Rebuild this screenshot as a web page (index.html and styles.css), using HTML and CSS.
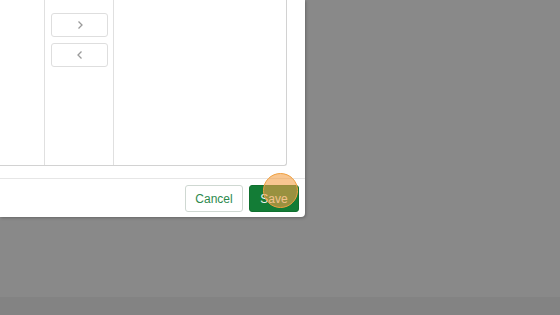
FILE: index.html
```html
<!DOCTYPE html>
<html>
<head>
<meta charset="utf-8">
<link rel="stylesheet" href="styles.css">
</head>
<body>
<div class="screen">
  <div class="modal">
    <div class="body">
      <div class="panel">
        <div class="col col-left"></div>
        <div class="col col-mid">
          <button class="arrow"><svg width="8" height="10" viewBox="0 0 8 10"><path d="M2.5 1.5 L6 5 L2.5 8.5" fill="none" stroke="#9a9a9a" stroke-width="1.3"/></svg></button>
          <button class="arrow"><svg width="8" height="10" viewBox="0 0 8 10"><path d="M5.5 1.5 L2 5 L5.5 8.5" fill="none" stroke="#9a9a9a" stroke-width="1.3"/></svg></button>
        </div>
        <div class="col col-right"></div>
      </div>
    </div>
    <div class="footer">
      <button class="btn btn-cancel">Cancel</button>
      <button class="btn btn-save">Save<span class="click"></span></button>
    </div>
  </div>
  <div class="strip"></div>
</div>
</body>
</html>
```
FILE: styles.css
```css
html, body {
  margin: 0;
  padding: 0;
}
body {
  width: 560px;
  height: 315px;
  overflow: hidden;
  background: #898989;
  font-family: "Liberation Sans", Arial, sans-serif;
}
.screen {
  width: 560px;
  height: 315px;
  display: flex;
  flex-direction: column;
}
.modal {
  width: 305px;
  height: 217px;
  background: #ffffff;
  border-radius: 0 0 4px 0;
  box-shadow: 1px 1px 3px rgba(0,0,0,0.25);
  display: flex;
  flex-direction: column;
  box-sizing: border-box;
}
.body {
  height: 178px;
  box-sizing: border-box;
}
.panel {
  width: 287px;
  height: 166px;
  box-sizing: border-box;
  border-right: 1px solid #d2d2d2;
  border-bottom: 1px solid #d2d2d2;
  border-radius: 0 0 3px 0;
  display: flex;
}
.col {
  box-sizing: border-box;
}
.col-left {
  width: 45px;
  border-right: 1px solid #e0e0e0;
}
.col-mid {
  width: 69px;
  border-right: 1px solid #e0e0e0;
  padding: 13px 5px 0 6px;
  display: flex;
  flex-direction: column;
  gap: 6px;
}
.col-right {
  flex: 1;
}
.arrow {
  width: 57px;
  height: 24px;
  box-sizing: border-box;
  border: 1px solid #dedede;
  border-radius: 3px;
  background: #fff;
  padding: 0;
  display: flex;
  align-items: center;
  justify-content: center;
}
.footer {
  height: 39px;
  box-sizing: border-box;
  border-top: 1px solid #e6e6e6;
  display: flex;
  justify-content: flex-end;
  align-items: flex-start;
  padding: 6px 6px 0 0;
  gap: 6px;
}
.btn {
  height: 27px;
  box-sizing: border-box;
  border-radius: 3px;
  font-family: "Liberation Sans", Arial, sans-serif;
  font-size: 12px;
  padding: 0;
}
.btn-cancel {
  width: 58px;
  background: #fff;
  border: 1px solid #cfd8d2;
  color: #2d8a4e;
}
.btn-save {
  width: 50px;
  background: #137c36;
  border: 1px solid #10702f;
  color: #f2f2f2;
  position: relative;
}
.click {
  position: absolute;
  left: 13px;
  top: -13px;
  width: 35px;
  height: 35px;
  box-sizing: border-box;
  border-radius: 50%;
  background: rgba(244, 160, 70, 0.6);
  border: 1.5px solid #f0a040;
}
.strip {
  margin-top: auto;
  height: 18px;
  background: #838383;
}
```
